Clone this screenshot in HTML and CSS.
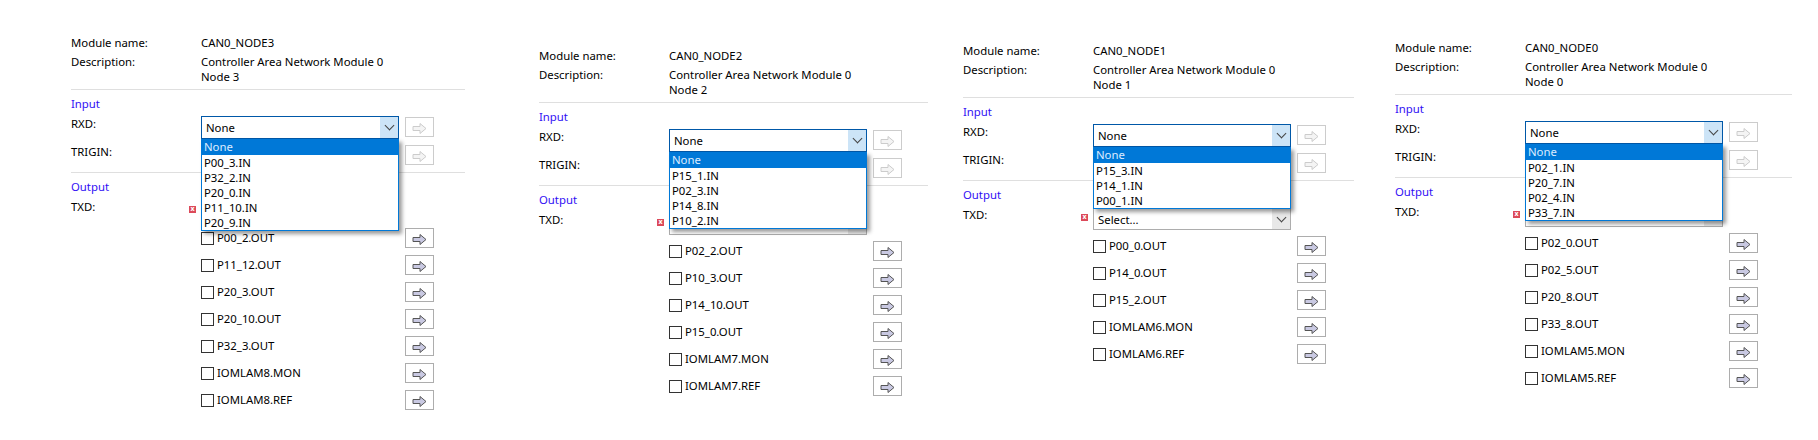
FILE: index.html
```html
<!DOCTYPE html>
<html lang="en">
<head>
    <meta charset="UTF-8">
    <title>CAN0 nodes</title>
    <link rel="stylesheet" href="styles.css">
</head>
<body>
    <svg class="defs" width="0" height="0">
        <symbol id="arrow" viewBox="0 0 15 13">
            <path d="M1 4.5H8V1.5L14 6.5L8 11.5V8.5H1Z"/>
        </symbol>
    </svg>

    <div class="sheet">
        <!-- node 3 -->
        <section class="panel panel-3">
            <div class="info name-row"><span>Module name:</span><span>CAN0_NODE3</span></div>
            <div class="info"><span>Description:</span><span>Controller Area Network Module 0<br>Node 3</span></div>
            <hr>
            <h3>Input</h3>
            <div class="row">
                <label>RXD:</label>
                <div class="combo open">None<i class="chev"></i>
                    <ul class="list">
                        <li class="sel">None</li>
                        <li>P00_3.IN</li>
                        <li>P32_2.IN</li>
                        <li>P20_0.IN</li>
                        <li>P11_10.IN</li>
                        <li>P20_9.IN</li>
                    </ul>
                </div>
                <button class="go off"><svg><use href="#arrow"/></svg></button>
            </div>
            <div class="row">
                <label>TRIGIN:</label>
                <div class="combo"><i class="chev"></i></div>
                <button class="go off"><svg><use href="#arrow"/></svg></button>
            </div>
            <hr>
            <h3>Output</h3>
            <div class="row row-txd">
                <label>TXD:</label>
                <i class="err">x</i>
                <div class="combo"><i class="chev"></i></div>
            </div>
            <div class="pin"><span class="check"></span><span class="name">P00_2.OUT</span><button class="go"><svg><use href="#arrow"/></svg></button></div>
            <div class="pin"><span class="check"></span><span class="name">P11_12.OUT</span><button class="go"><svg><use href="#arrow"/></svg></button></div>
            <div class="pin"><span class="check"></span><span class="name">P20_3.OUT</span><button class="go"><svg><use href="#arrow"/></svg></button></div>
            <div class="pin"><span class="check"></span><span class="name">P20_10.OUT</span><button class="go"><svg><use href="#arrow"/></svg></button></div>
            <div class="pin"><span class="check"></span><span class="name">P32_3.OUT</span><button class="go"><svg><use href="#arrow"/></svg></button></div>
            <div class="pin"><span class="check"></span><span class="name">IOMLAM8.MON</span><button class="go"><svg><use href="#arrow"/></svg></button></div>
            <div class="pin"><span class="check"></span><span class="name">IOMLAM8.REF</span><button class="go"><svg><use href="#arrow"/></svg></button></div>
        </section>

        <!-- node 2 -->
        <section class="panel panel-2">
            <div class="info name-row"><span>Module name:</span><span>CAN0_NODE2</span></div>
            <div class="info"><span>Description:</span><span>Controller Area Network Module 0<br>Node 2</span></div>
            <hr>
            <h3>Input</h3>
            <div class="row">
                <label>RXD:</label>
                <div class="combo open">None<i class="chev"></i>
                    <ul class="list">
                        <li class="sel">None</li>
                        <li>P15_1.IN</li>
                        <li>P02_3.IN</li>
                        <li>P14_8.IN</li>
                        <li>P10_2.IN</li>
                    </ul>
                </div>
                <button class="go off"><svg><use href="#arrow"/></svg></button>
            </div>
            <div class="row">
                <label>TRIGIN:</label>
                <div class="combo"><i class="chev"></i></div>
                <button class="go off"><svg><use href="#arrow"/></svg></button>
            </div>
            <hr>
            <h3>Output</h3>
            <div class="row row-txd">
                <label>TXD:</label>
                <i class="err">x</i>
                <div class="combo"><i class="chev"></i></div>
            </div>
            <div class="pin"><span class="check"></span><span class="name">P02_2.OUT</span><button class="go"><svg><use href="#arrow"/></svg></button></div>
            <div class="pin"><span class="check"></span><span class="name">P10_3.OUT</span><button class="go"><svg><use href="#arrow"/></svg></button></div>
            <div class="pin"><span class="check"></span><span class="name">P14_10.OUT</span><button class="go"><svg><use href="#arrow"/></svg></button></div>
            <div class="pin"><span class="check"></span><span class="name">P15_0.OUT</span><button class="go"><svg><use href="#arrow"/></svg></button></div>
            <div class="pin"><span class="check"></span><span class="name">IOMLAM7.MON</span><button class="go"><svg><use href="#arrow"/></svg></button></div>
            <div class="pin"><span class="check"></span><span class="name">IOMLAM7.REF</span><button class="go"><svg><use href="#arrow"/></svg></button></div>
        </section>

        <!-- node 1 -->
        <section class="panel panel-1">
            <div class="info name-row"><span>Module name:</span><span>CAN0_NODE1</span></div>
            <div class="info"><span>Description:</span><span>Controller Area Network Module 0<br>Node 1</span></div>
            <hr>
            <h3>Input</h3>
            <div class="row">
                <label>RXD:</label>
                <div class="combo open">None<i class="chev"></i>
                    <ul class="list">
                        <li class="sel">None</li>
                        <li>P15_3.IN</li>
                        <li>P14_1.IN</li>
                        <li>P00_1.IN</li>
                    </ul>
                </div>
                <button class="go off"><svg><use href="#arrow"/></svg></button>
            </div>
            <div class="row">
                <label>TRIGIN:</label>
                <div class="combo"><i class="chev"></i></div>
                <button class="go off"><svg><use href="#arrow"/></svg></button>
            </div>
            <hr>
            <h3>Output</h3>
            <div class="row row-txd">
                <label>TXD:</label>
                <i class="err">x</i>
                <div class="combo">Select...<i class="chev"></i></div>
            </div>
            <div class="pin"><span class="check"></span><span class="name">P00_0.OUT</span><button class="go"><svg><use href="#arrow"/></svg></button></div>
            <div class="pin"><span class="check"></span><span class="name">P14_0.OUT</span><button class="go"><svg><use href="#arrow"/></svg></button></div>
            <div class="pin"><span class="check"></span><span class="name">P15_2.OUT</span><button class="go"><svg><use href="#arrow"/></svg></button></div>
            <div class="pin"><span class="check"></span><span class="name">IOMLAM6.MON</span><button class="go"><svg><use href="#arrow"/></svg></button></div>
            <div class="pin"><span class="check"></span><span class="name">IOMLAM6.REF</span><button class="go"><svg><use href="#arrow"/></svg></button></div>
        </section>

        <!-- node 0 -->
        <section class="panel panel-0">
            <div class="info name-row"><span>Module name:</span><span>CAN0_NODE0</span></div>
            <div class="info"><span>Description:</span><span>Controller Area Network Module 0<br>Node 0</span></div>
            <hr>
            <h3>Input</h3>
            <div class="row">
                <label>RXD:</label>
                <div class="combo open">None<i class="chev"></i>
                    <ul class="list">
                        <li class="sel">None</li>
                        <li>P02_1.IN</li>
                        <li>P20_7.IN</li>
                        <li>P02_4.IN</li>
                        <li>P33_7.IN</li>
                    </ul>
                </div>
                <button class="go off"><svg><use href="#arrow"/></svg></button>
            </div>
            <div class="row">
                <label>TRIGIN:</label>
                <div class="combo"><i class="chev"></i></div>
                <button class="go off"><svg><use href="#arrow"/></svg></button>
            </div>
            <hr>
            <h3>Output</h3>
            <div class="row row-txd">
                <label>TXD:</label>
                <i class="err">x</i>
                <div class="combo"><i class="chev"></i></div>
            </div>
            <div class="pin"><span class="check"></span><span class="name">P02_0.OUT</span><button class="go"><svg><use href="#arrow"/></svg></button></div>
            <div class="pin"><span class="check"></span><span class="name">P02_5.OUT</span><button class="go"><svg><use href="#arrow"/></svg></button></div>
            <div class="pin"><span class="check"></span><span class="name">P20_8.OUT</span><button class="go"><svg><use href="#arrow"/></svg></button></div>
            <div class="pin"><span class="check"></span><span class="name">P33_8.OUT</span><button class="go"><svg><use href="#arrow"/></svg></button></div>
            <div class="pin"><span class="check"></span><span class="name">IOMLAM5.MON</span><button class="go"><svg><use href="#arrow"/></svg></button></div>
            <div class="pin"><span class="check"></span><span class="name">IOMLAM5.REF</span><button class="go"><svg><use href="#arrow"/></svg></button></div>
        </section>
    </div>
</body>
</html>
```

FILE: styles.css
```css
* {
    box-sizing: border-box;
}
html, body {
    margin: 0;
    height: 440px;
    overflow: hidden;
    background-color: #fff;
}
body {
    font-family: "Noto Sans", sans-serif;
    font-size: 11.35px;
    line-height: 15px;
    color: #000;
}
.defs {
    position: absolute;
}
.sheet {
    display: flex;
    align-items: flex-start;
    padding-left: 71px;
}

.panel {
    flex: none;
}
.panel-3 {
    width: 468px;
    padding-top: 35px;
}
.panel-2 {
    width: 424px;
    padding-top: 48px;
}
.panel-1 {
    width: 432px;
    padding-top: 43px;
}
.panel-0 {
    width: 397px;
    padding-top: 40px;
}

.info {
    display: grid;
    grid-template-columns: 130px 1fr;
    margin-bottom: 5px;
}
.name-row {
    margin-bottom: 4px;
}
hr {
    height: 1px;
    width: 394px;
    border: 0;
    margin: 0;
    background-color: #dfdfdf;
}
.panel-2 hr {
    width: 389px;
}
.panel-1 hr {
    width: 391px;
}
.panel-0 hr {
    width: 397px;
}
h3 {
    font-size: 11.35px;
    font-weight: normal;
    line-height: 15px;
    color: #3210f5;
    margin: 6px 0 5px 0;
}

.row {
    display: grid;
    grid-template-columns: 130px 198px 35px;
    height: 28px;
}
.row .go {
    width: 29px;
    margin: 1px 0 0 6px;
}
.row-txd {
    height: 29px;
}
.row-txd .combo {
    grid-column: 2;
    grid-row: 1;
    margin-top: 1px;
}
.row-txd label {
    grid-column: 1;
    grid-row: 1;
}
.err {
    grid-column: 1;
    grid-row: 1;
    justify-self: end;
    width: 7px;
    height: 7px;
    margin: 7px 5px 0 0;
    background-color: #dc4a5a;
    color: #fff;
    font-size: 7px;
    font-style: normal;
    font-weight: bold;
    line-height: 6px;
    text-align: center;
}

.combo {
    position: relative;
    height: 22px;
    padding: 3px 0 0 4px;
    border: 1px solid #adadad;
    background-color: #fff;
}
.chev {
    position: absolute;
    top: 0;
    right: 0;
    bottom: 0;
    width: 18px;
    background-color: #e8e8e8;
}
.chev::after {
    content: "";
    position: absolute;
    left: 6px;
    top: 5px;
    width: 6px;
    height: 6px;
    border-right: 1px solid #444;
    border-bottom: 1px solid #444;
    transform: rotate(45deg);
}
.combo.open {
    border-color: #0058a8;
    height: 23px;
}
.combo.open .chev {
    background-color: #cce4f7;
}

.list {
    position: absolute;
    z-index: 2;
    left: -1px;
    right: -1px;
    top: 22px;
    margin: 0;
    padding: 0;
    list-style: none;
    background-color: #fff;
    border: 1px solid #0078d7;
    border-top: 0;
    box-shadow: 3px 3px 4px rgba(0, 0, 0, 0.4);
}
.list li {
    height: 15px;
    line-height: 15px;
    padding-left: 2px;
}
.list .sel {
    height: 16px;
    background-color: #0078d7;
    color: #dcecff;
}

.go {
    display: block;
    width: 29px;
    height: 20px;
    padding: 0;
    border: 1px solid #adadad;
    background-color: #fff;
}
.go svg {
    display: block;
    width: 15px;
    height: 13px;
    margin: 2px auto 0 auto;
    fill: #c9c9e2;
    stroke: #555;
    stroke-width: 1;
}
.go.off {
    border-color: #ccc;
}
.go.off svg {
    fill: #f4f4f4;
    stroke: #ccc;
}

.pin {
    display: grid;
    grid-template-columns: 13px 191px 29px;
    align-items: center;
    height: 20px;
    margin: 0 0 7px 130px;
}
.check {
    display: block;
    width: 13px;
    height: 13px;
    border: 1px solid #333;
    background-color: #fff;
}
.name {
    padding: 0 0 1px 3px;
}
```
